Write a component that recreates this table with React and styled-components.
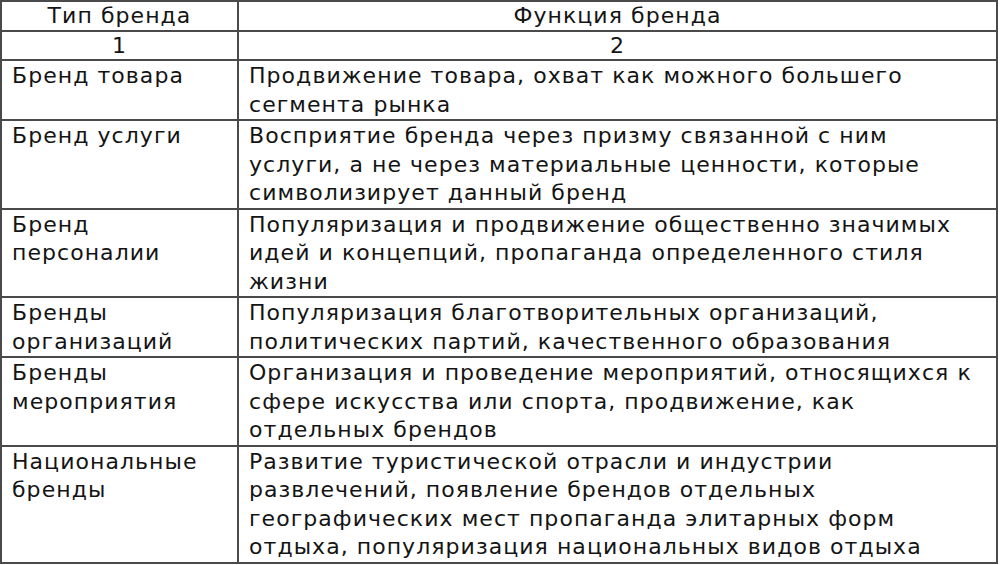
import { createGlobalStyle } from 'styled-components';
import styled from 'styled-components';

const GlobalStyle = createGlobalStyle`
  body {
    margin: 0;
    background: #fff;
  }
`;

const Table = styled.table`
  width: 998px;
  border-collapse: collapse;
  table-layout: fixed;
  font-family: 'DejaVu Sans', Verdana, sans-serif;
  font-size: 22px;
  line-height: 28.5px;
  letter-spacing: 1.05px;
  color: #141414;
`;

const Cell = styled.td`
  border: 2px solid #4a4a4a;
  padding: ${p => (p.$center ? '0 4px' : '1px 4px 0 10px')};
  line-height: ${p => (p.$center ? '27.5px' : '28.5px')};
  vertical-align: top;
  white-space: nowrap;
  text-align: ${p => (p.$center ? 'center' : 'left')};
`;

const Line = styled.span`
  display: block;
`;

const rows = [
  [['Бренд товара'], ['Продвижение товара, охват как можного большего', 'сегмента рынка']],
  [
    ['Бренд услуги'],
    [
      'Восприятие бренда через призму связанной с ним',
      'услуги, а не через материальные ценности, которые',
      'символизирует данный бренд',
    ],
  ],
  [
    ['Бренд', 'персоналии'],
    [
      'Популяризация и продвижение общественно значимых',
      'идей и концепций, пропаганда определенного стиля',
      'жизни',
    ],
  ],
  [
    ['Бренды', 'организаций'],
    ['Популяризация благотворительных организаций,', 'политических партий, качественного образования'],
  ],
  [
    ['Бренды', 'мероприятия'],
    [
      'Организация и проведение мероприятий, относящихся к',
      'сфере искусства или спорта, продвижение, как',
      'отдельных брендов',
    ],
  ],
  [
    ['Национальные', 'бренды'],
    [
      'Развитие туристической отрасли и индустрии',
      'развлечений, появление брендов отдельных',
      'географических мест пропаганда элитарных форм',
      'отдыха, популяризация национальных видов отдыха',
    ],
  ],
];

const Lines = ({ items }) => items.map(t => <Line key={t}>{t}</Line>);

export default function App() {
  return (
    <>
      <GlobalStyle />
      <Table>
        <colgroup>
          <col style={{ width: 237 }} />
          <col />
        </colgroup>
        <tbody>
          <tr>
            <Cell $center>Тип бренда</Cell>
            <Cell $center>Функция бренда</Cell>
          </tr>
          <tr>
            <Cell $center>1</Cell>
            <Cell $center>2</Cell>
          </tr>
          {rows.map(([type, fn]) => (
            <tr key={type[0] + type.length}>
              <Cell>
                <Lines items={type} />
              </Cell>
              <Cell>
                <Lines items={fn} />
              </Cell>
            </tr>
          ))}
        </tbody>
      </Table>
    </>
  );
}
